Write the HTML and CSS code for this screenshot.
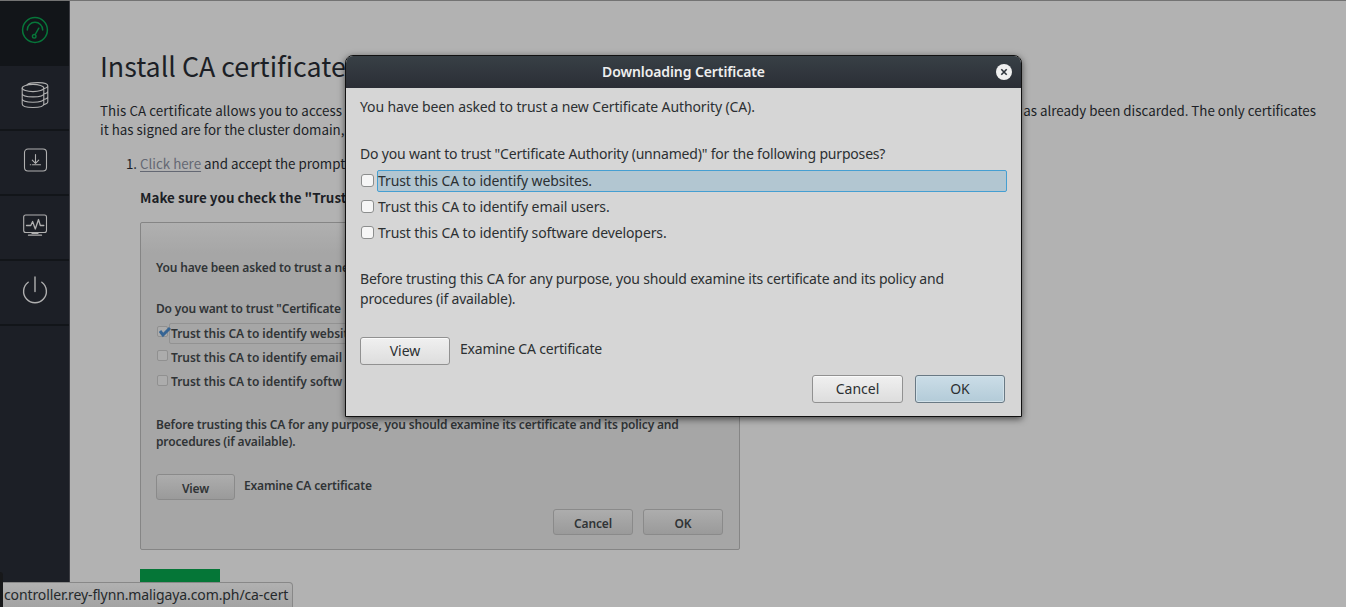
FILE: index.html
```html
<!DOCTYPE html>
<html lang="en"><head><meta charset="utf-8"><title>Install CA certificate</title><link rel="stylesheet" href="styles.css"></head>
<body>
<div class="app">
<nav class="sidebar">
<a class="nav-item active"><svg width="28" height="28" viewBox="0 0 28 28"><circle cx="14" cy="14" r="12.4" stroke-width="1.5"/><path d="M6.3 14a7.7 7.7 0 0 1 15.400 0M17.800 12.200l-3.600 6.300" stroke-width="1.500"/><circle cx="13.200" cy="20.300" r="1.800" stroke-width="1.400"/></svg></a>
<a class="nav-item"><svg width="28" height="28" viewBox="0 0 28 28"><ellipse cx="12" cy="7" rx="10.800" ry="3.600"/><path d="M1.200 7v16c0 4.600 21.600 4.600 21.600 0V7M1.200 12.500c0 4.500 21.600 4.500 21.600 0M1.200 17.800c0 4.500 21.600 4.500 21.600 0M6 3.800C9 .8 26.800.7 26.800 4.800v16c0 1.200-1.500 2.200-4 2.900M26.800 4.800c0 1.500-1.600 2.300-4 2.900M26.800 10c0 1.500-1.600 2.600-4 3M26.800 15.500c0 1.500-1.600 2.600-4 3"/></svg></a>
<a class="nav-item"><svg width="28" height="28" viewBox="0 0 28 28"><rect x="3.500" y="3" width="22" height="22" rx="3.500"/><path d="M14.500 8.500v8.500M11.300 14.100l3.200 3.200 3.200-3.200M11.500 18.700h8M9.300 18.700h.5"/></svg></a>
<a class="nav-item"><svg width="28" height="28" viewBox="0 0 28 28"><rect x="2.700" y="4" width="22.800" height="17.500" rx="2"/><path d="M5.500 14.500h4.300l1.800-4 2.700 7.500 3.200-9.500 1.800 6h3.500M11 22.300h6M7.500 24.200h13" stroke-width="1.300"/></svg></a>
<a class="nav-item"><svg width="28" height="28" viewBox="0 0 28 28"><path d="M14 1v14.500M7.200 6.200a11.400 11.400 0 1 0 13.600 0" stroke-width="1.400"/></svg></a>
</nav>
<main class="content">
<h1>Install CA certificate</h1>
<div class="intro"><div class="split"><span class="intro-start">This CA certificate allows you to access</span><span>as already been discarded. The only certificates</span></div><div>it has signed are for the cluster domain,</div></div>
<ol><li><p><a class="link">Click here</a> and accept the prompt</p><p class="strong">Make sure you check the "Trust</p>
<div class="sample">
<div class="s-line s-first">You have been asked to trust a new</div>
<div class="s-line s-question">Do you want to trust "Certificate</div>
<div class="s-row"><i class="s-box"><svg class="tick" width="13" height="12" viewBox="0 0 13 12"><path d="M1 5l3 4L11 2"/></svg></i><span class="s-focus">Trust this CA to identify websites.</span></div>
<div class="s-row"><i class="s-box"></i><span class="s-label">Trust this CA to identify email</span></div>
<div class="s-row"><i class="s-box"></i><span class="s-label">Trust this CA to identify softw</span></div>
<div class="s-text">Before trusting this CA for any purpose, you should examine its certificate and its policy and<br>procedures (if available).</div>
<div class="s-view"><span class="s-btn">View</span><span class="s-examine">Examine CA certificate</span></div>
<div class="s-actions"><span class="s-btn">Cancel</span><span class="s-btn">OK</span></div>
</div></li></ol>
<div class="next"></div>
</main>
</div>
<section class="dialog">
<header><span>Downloading Certificate</span><svg class="close" width="16" height="16" viewBox="0 0 16 16"><circle cx="8" cy="8" r="8"/><path d="M5.300 5.300l5.400 5.400M10.700 5.300l-5.400 5.400"/></svg></header>
<div class="body">
<div class="line lead">You have been asked to trust a new Certificate Authority (CA).</div>
<div class="line question">Do you want to trust "Certificate Authority (unnamed)" for the following purposes?</div>
<div class="row"><i class="box"></i><span class="label focus">Trust this CA to identify websites.</span></div>
<div class="row"><i class="box"></i><span class="label">Trust this CA to identify email users.</span></div>
<div class="row"><i class="box"></i><span class="label">Trust this CA to identify software developers.</span></div>
<div class="line note">Before trusting this CA for any purpose, you should examine its certificate and its policy and<br>procedures (if available).</div>
<div class="view"><button>View</button><span>Examine CA certificate</span></div>
<div class="actions"><button class="cancel">Cancel</button><button class="primary">OK</button></div>
</div>
</section>
<div class="edge"></div>
<div class="status">controller.rey-flynn.maligaya.com.ph/ca-cert</div>
</body></html>
```
FILE: styles.css
```css
*{box-sizing:border-box}
body{margin:0;width:1346px;height:607px;overflow:hidden;position:relative;background:#b2b2b2;color:#1c1f26;font:13.35px/19px "Noto Sans CJK SC",sans-serif}
.app{display:flex;height:607px;border-top:1px solid #737373;overflow:hidden}
.sidebar{width:70px;background:#1c1f26;border-right:1px solid #3b3c42;flex:none}
.nav-item{height:65px;display:flex;align-items:center;justify-content:center;border-bottom:2px solid #121519;padding-bottom:5px}
.nav-item svg{fill:none;stroke:#b0b0b0;stroke-width:1.1;stroke-linecap:round;stroke-linejoin:round}
.nav-item.active{background:#121519}
.nav-item.active svg{stroke:#07763a}
.content{flex:1;padding:45px 30px 0 30px}
h1{font-size:26.8px;line-height:40px;font-weight:400;margin:0 0 15px}
.intro{margin-bottom:15px}
.intro-start{letter-spacing:.08px}
.split{display:flex;justify-content:space-between}
ol{margin:0;padding-left:40px}
p{margin:0 0 15px}
.link{color:#646873;text-decoration:underline;text-underline-offset:2px}
.strong{font-weight:700;letter-spacing:.06px}
.sample{width:600px;height:328px;border:1px solid #858585;border-radius:2px;background:linear-gradient(#b0b0b0,#a6a6a6 30px);padding:36px 15px 0;color:#303436;font:600 12px/18px "Noto Sans",sans-serif;letter-spacing:-.16px}
.s-question{margin-top:23px;margin-bottom:3px}
.s-row{display:flex;align-items:center;height:24.5px;letter-spacing:-.05px}
.s-box{width:11px;height:11px;border:1px solid #909090;border-radius:2px;background:#acacac;margin:-4px 2px 0 1px;position:relative}
.tick{position:absolute;left:1px;top:-1px;fill:none;stroke:#376594;stroke-width:3}
.s-focus{border:1px solid #929292;border-radius:2px;height:21px;flex:1;margin-left:-1px;padding-left:1px;line-height:20px}
.s-label{padding-left:1px}
.s-text{line-height:17.5px;margin-top:21px}
.s-view{display:flex;gap:9px;margin-top:23px}
.s-btn{width:80px;height:26px;border:1px solid #8a8a8a;border-radius:3px;background:linear-gradient(#adadad,#9a9a9a);text-align:center;line-height:27px}
.s-view .s-btn{width:79px}
.s-examine{line-height:24px}
.s-actions{display:flex;justify-content:flex-end;gap:10px;margin-top:9px;padding-right:1px}
.next{width:80px;height:40px;background:#057637;margin:19px 0 0 40px}
.dialog{position:absolute;left:345px;top:55px;width:677px;height:362px;border:1px solid #111;border-radius:8px 8px 0 0;background:#d6d6d6;box-shadow:0 2px 7px #0009;color:#2c3032;font:14px/20px "Noto Sans",sans-serif;letter-spacing:-.1px}
header{height:32px;border-radius:7px 7px 0 0;background:linear-gradient(#384046,#2b2e36);color:#eee;font-weight:600;display:grid;grid-template-columns:1fr auto 1fr;align-items:center}
header span{grid-column:2}
.close{justify-self:end;margin-right:9px;fill:#f0f0f0;stroke:none}
.close path{stroke:#2f353c;stroke-width:1.6}
.body{padding:9px 14px 0}
.lead{letter-spacing:-.12px}
.question{margin:27px 0 4px;letter-spacing:-.19px}
.row{display:flex;align-items:center;height:26px}
.box{width:13px;height:13px;border:1px solid #8c8e8e;border-radius:3px;background:#f6f6f6;margin:-2px 3px 0 1px}
.label{height:22px;line-height:20px;border:1px solid transparent;border-radius:2px}
.focus{width:630px;background:#b2c6d1;border-color:#459fd2}
.note{margin-top:23px;letter-spacing:-.2px}
.view{display:flex;gap:10px;margin-top:28px;line-height:24px;letter-spacing:-.2px}
button{font:inherit;color:inherit;letter-spacing:0;width:90px;height:28px;border:1px solid #919191;border-radius:3px;background:linear-gradient(#f0f0f0,#ddd);padding:0;box-shadow:inset 0 1px #fafafa;line-height:26px}
.actions{display:flex;justify-content:flex-end;gap:12px;margin-top:10px;padding-right:2px}
.cancel{width:91px}
.primary{background:linear-gradient(#cbdde7,#b3cbd8);border-color:#697984;box-shadow:inset 0 0 0 1px #d2e1e9}
.edge{position:absolute;left:0;top:572px;width:3px;height:35px;background:#17181a;border-radius:0 3px 0 0}
.status{position:absolute;left:3px;top:582px;width:290px;height:26px;padding-left:1px;border:1px solid #888;border-left:0;border-radius:0 4px 0 0;background:linear-gradient(#b1b1b1,#a3a3a3);font:14px/24px "Noto Sans",sans-serif;letter-spacing:-.11px;color:#25292b;white-space:nowrap}
```
